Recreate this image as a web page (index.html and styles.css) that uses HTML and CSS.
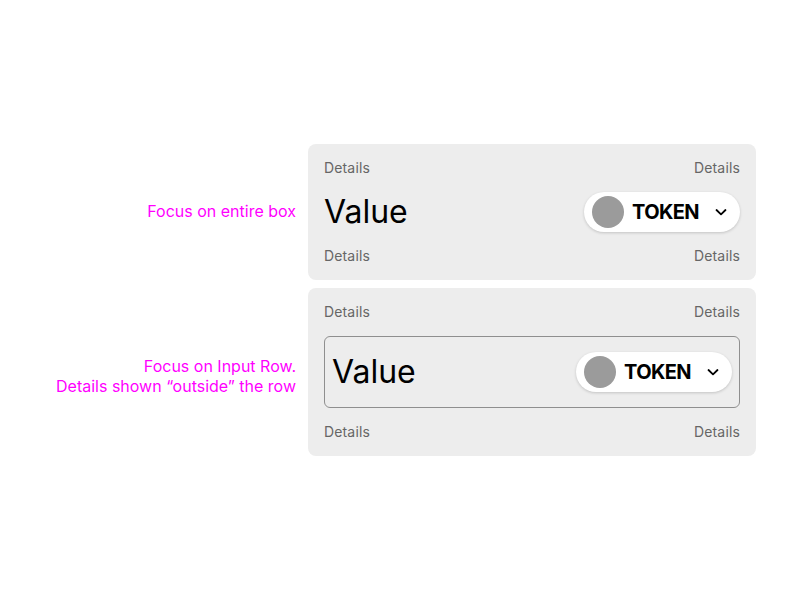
FILE: index.html
```html
<!DOCTYPE html>
<html>
<head>
<meta charset="utf-8">
<link rel="stylesheet" href="styles.css">
</head>
<body>
<main class="stage">
  <div class="grid">
    <p class="label label-one">Focus on entire box</p>
    <section class="card">
      <div class="details"><span>Details</span><span>Details</span></div>
      <div class="row">
        <span class="value">Value</span>
        <button class="token">
          <span class="token-icon"></span>
          <span class="token-name">TOKEN</span>
          <svg class="chev" viewBox="0 0 16 16" width="16" height="16"><path d="M3.5 6 L8 10.3 L12.5 6" fill="none" stroke="#000" stroke-width="1.8" stroke-linecap="round" stroke-linejoin="round"/></svg>
        </button>
      </div>
      <div class="details"><span>Details</span><span>Details</span></div>
    </section>

    <p class="label label-two">Focus on Input Row.<br>Details shown “outside” the row</p>
    <section class="card">
      <div class="details"><span>Details</span><span>Details</span></div>
      <div class="row row-boxed">
        <span class="value">Value</span>
        <button class="token">
          <span class="token-icon"></span>
          <span class="token-name">TOKEN</span>
          <svg class="chev" viewBox="0 0 16 16" width="16" height="16"><path d="M3.5 6 L8 10.3 L12.5 6" fill="none" stroke="#000" stroke-width="1.8" stroke-linecap="round" stroke-linejoin="round"/></svg>
        </button>
      </div>
      <div class="details"><span>Details</span><span>Details</span></div>
    </section>
  </div>
</main>
</body>
</html>
```

FILE: styles.css
```css
* { box-sizing: border-box; }
html, body { margin: 0; padding: 0; background: #fff; }
body { font-family: Inter, "Noto Sans", sans-serif; }

.stage {
  width: 800px;
  height: 600px;
  display: flex;
  align-items: center;
  justify-content: flex-end;
  padding-right: 44px;
}

.grid {
  display: grid;
  grid-template-columns: 252px 448px;
  column-gap: 12px;
  row-gap: 8px;
}

.label {
  margin: 0;
  color: #ff00ff;
  font-size: 16px;
  line-height: 20px;
  text-align: right;
  align-self: center;
}
.label-one { padding-bottom: 3px; }
.label-two { padding-top: 8px; }

.card {
  background: #ededed;
  border-radius: 8px;
  padding: 16px;
  display: flex;
  flex-direction: column;
  gap: 16px;
}

.details {
  display: flex;
  justify-content: space-between;
  font-size: 14px;
  letter-spacing: 0.15px;
  line-height: 16px;
  height: 16px;
  color: #666;
}

.row {
  display: flex;
  align-items: center;
  justify-content: space-between;
  height: 40px;
}

.row-boxed {
  height: 72px;
  border: 1px solid #8f8f8f;
  border-radius: 6px;
  padding: 0 7px;
}

.value {
  font-size: 32px;
  line-height: 42px;
  color: #000;
}

.token {
  display: flex;
  align-items: center;
  height: 40px;
  padding: 0 11px 0 8px;
  border: none;
  border-radius: 20px;
  background: #fff;
  box-shadow: 0 1px 3px rgba(0,0,0,0.18);
  font-family: inherit;
  cursor: pointer;
}

.token-icon {
  width: 32px;
  height: 32px;
  border-radius: 50%;
  background: #9b9b9b;
}

.token-name {
  margin-left: 8px;
  margin-right: 14px;
  font-size: 20px;
  font-weight: 700;
  letter-spacing: -0.6px;
  color: #000;
}

.chev { display: block; }
```
